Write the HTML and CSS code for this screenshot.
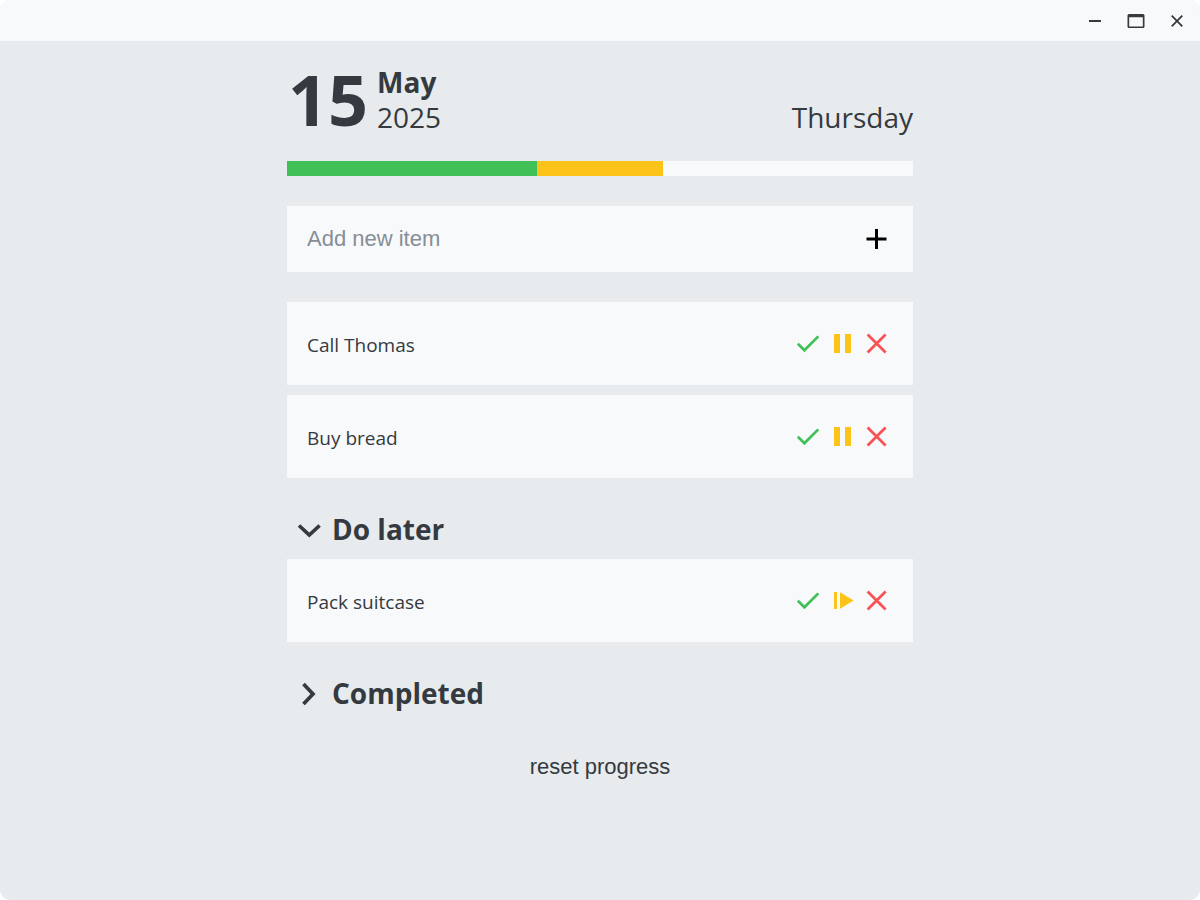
FILE: index.html
```html
<!DOCTYPE html>
<html lang="en">
<head>
<meta charset="utf-8">
<title>Todo</title>
<link rel="stylesheet" href="styles.css">
</head>
<body>
<svg class="defs" aria-hidden="true">
  <symbol id="check" viewBox="0 0 24 24"><path d="M.8 11.700 7.400 18.300 21.300 4.400" fill="none" stroke="currentColor" stroke-width="2.700"/></symbol>
  <symbol id="pause" viewBox="0 0 24 24"><path d="M3 2h6v19H3zM14 2h6v19h-6z" fill="currentColor"/></symbol>
  <symbol id="resume" viewBox="0 0 24 24"><path d="M3 3h3v17H3zM9 3.200 22.700 11.500 9 19.800z" fill="currentColor"/></symbol>
  <symbol id="cross" viewBox="0 0 24 24"><path d="M2.600 2.500 20.600 20.500M20.600 2.500 2.600 20.500" fill="none" stroke="currentColor" stroke-width="2.700"/></symbol>
</svg>
<div class="window">
  <header class="titlebar">
    <button class="window-button" aria-label="Minimize"><svg class="window-icon" viewBox="0 0 20 20"><path d="M4 10h12" fill="none" stroke="currentColor" stroke-width="2"/></svg></button>
    <button class="window-button" aria-label="Maximize"><svg class="window-icon" viewBox="0 0 20 20"><path d="M3 3h14a1.500 1.500 0 0 1 1.500 1.500v11a1.500 1.500 0 0 1-1.500 1.500H3a1.500 1.500 0 0 1-1.500-1.500v-11A1.500 1.500 0 0 1 3 3zM3.200 6.200v9.200h13.600V6.200z" fill="currentColor" fill-rule="evenodd"/></svg></button>
    <button class="window-button" aria-label="Close"><svg class="window-icon" viewBox="0 0 20 20"><path d="M4.700 4.700 15.300 15.300M15.300 4.700 4.700 15.300" fill="none" stroke="currentColor" stroke-width="1.800"/></svg></button>
  </header>
  <main class="content">
    <div class="date">
      <span class="day">15</span>
      <div class="month-year"><span class="month">May</span><span>2025</span></div>
      <span class="weekday">Thursday</span>
    </div>
    <div class="progress"><div class="progress-done"></div><div class="progress-paused"></div></div>
    <form class="add">
      <input class="add-input" type="text" placeholder="Add new item" aria-label="Add new item">
      <button class="icon-button add-button" type="button" aria-label="Add"><svg class="icon" viewBox="0 0 24 24"><path d="M11.500 2v20M1.500 12h20" fill="none" stroke="currentColor" stroke-width="3"/></svg></button>
    </form>
    <ul class="list">
      <li class="item"><span class="item-text">Call Thomas</span>
        <button class="icon-button done" aria-label="Complete"><svg class="icon"><use href="#check"/></svg></button>
        <button class="icon-button later" aria-label="Do later"><svg class="icon"><use href="#pause"/></svg></button>
        <button class="icon-button delete" aria-label="Delete"><svg class="icon"><use href="#cross"/></svg></button></li>
      <li class="item"><span class="item-text">Buy bread</span>
        <button class="icon-button done" aria-label="Complete"><svg class="icon"><use href="#check"/></svg></button>
        <button class="icon-button later" aria-label="Do later"><svg class="icon"><use href="#pause"/></svg></button>
        <button class="icon-button delete" aria-label="Delete"><svg class="icon"><use href="#cross"/></svg></button></li>
    </ul>
    <h2 class="section"><button class="section-toggle" aria-expanded="true"><svg class="icon" viewBox="0 0 24 24"><path d="M2 7.500 12.300 17 22.600 7.500" fill="none" stroke="currentColor" stroke-width="3.700"/></svg>Do later</button></h2>
    <ul class="list">
      <li class="item"><span class="item-text">Pack suitcase</span>
        <button class="icon-button done" aria-label="Complete"><svg class="icon"><use href="#check"/></svg></button>
        <button class="icon-button later" aria-label="Resume"><svg class="icon"><use href="#resume"/></svg></button>
        <button class="icon-button delete" aria-label="Delete"><svg class="icon"><use href="#cross"/></svg></button></li>
    </ul>
    <h2 class="section"><button class="section-toggle" aria-expanded="false"><svg class="icon" viewBox="0 0 24 24"><path d="M6.500 2 16 12 6.500 22" fill="none" stroke="currentColor" stroke-width="3.700"/></svg>Completed</button></h2>
    <button class="reset">reset progress</button>
  </main>
</div>
</body>
</html>
```
FILE: styles.css
```css
* { box-sizing: border-box; }
body {
  margin: 0;
  background: #ffffff;
  color: #343a40;
  font-family: "Open Sans", "Noto Sans", sans-serif;
}
button {
  padding: 0;
  border: 0;
  background: none;
  color: inherit;
  font: inherit;
  cursor: pointer;
}
.defs { display: none; }
.window {
  min-height: 100vh;
  overflow: hidden;
  border-radius: 10px;
  background: #e7ebee;
}
.titlebar {
  display: flex;
  justify-content: flex-end;
  height: 41px;
  padding-right: 3px;
  background: #f8f9fb;
}
.window-button {
  display: grid;
  place-items: center;
  width: 41px;
}
.window-icon { width: 20px; height: 20px; }
.content {
  max-width: 666px;
  margin: 0 auto;
  padding: 24px 20px;
}
.date {
  display: flex;
  align-items: flex-end;
  height: 70px;
}
.day {
  padding-left: 1px;
  font-size: 70px;
  font-weight: 700;
  line-height: 72px;
}
.month-year {
  display: flex;
  flex-direction: column;
  flex: 1;
  padding-left: 9px;
  font-size: 28px;
  line-height: 35px;
}
.month { font-weight: 700; }
.weekday {
  font-size: 28px;
  line-height: 35px;
}
.progress {
  display: flex;
  height: 15px;
  margin: 26px 0 30px;
  background: #f8f9fb;
}
.progress-done { width: 40%; background: #40c057; }
.progress-paused { width: 20%; background: #fcc419; }
.add {
  display: flex;
  align-items: center;
  height: 66px;
  margin-bottom: 30px;
  padding: 0 24px 0 20px;
  background: #f8f9fb;
}
.add-input {
  flex: 1;
  min-width: 0;
  padding: 0;
  border: 0;
  outline: 0;
  background: none;
  color: inherit;
  font-family: "Liberation Sans", Arial, sans-serif;
  font-size: 22px;
}
.add-input::placeholder { color: #868e96; opacity: 1; }
.list {
  display: grid;
  gap: 10px;
  margin: 0;
  padding: 0;
  list-style: none;
}
.item {
  display: flex;
  align-items: center;
  gap: 10px;
  min-height: 83px;
  padding: 0 24px 0 20px;
  background: #f8f9fb;
}
.item-text {
  flex: 1;
  padding-top: 2px;
  font-size: 19px;
}
.icon-button {
  display: grid;
  place-items: center;
}
.icon { display: block; width: 24px; height: 24px; }
.add-button { color: #000000; }
.done { color: #40c057; }
.later { color: #fcc419; }
.delete { color: #fa5252; }
.section {
  margin: 31px 0 9px;
  font-size: 28px;
  line-height: 41px;
}
.section-toggle {
  display: flex;
  align-items: center;
  gap: 11px;
  padding-left: 10px;
}
.reset {
  display: block;
  margin: 40px auto 0;
  font-family: "Liberation Sans", Arial, sans-serif;
  font-size: 22px;
}
```
